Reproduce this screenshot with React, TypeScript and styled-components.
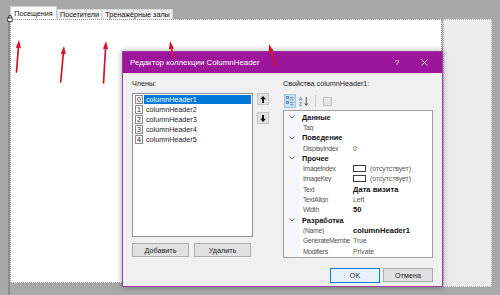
import React from "react";
import styled, { createGlobalStyle } from "styled-components";

const GlobalStyle = createGlobalStyle`
  html, body { margin: 0; padding: 0; background: #a8a8a8; }
  body { font-family: "Liberation Sans", Arial, sans-serif; }
  * { box-sizing: border-box; }
`;

const Screen = styled.div`
  position: relative;
  width: 500px;
  height: 295px;
  overflow: hidden;
  background: #a8a8a8;
  padding: 6px 0 0 8px;
  display: flex;
  flex-direction: column;
`;

const TabStrip = styled.div`
  display: flex;
  align-items: flex-end;
  height: 13px;
  padding-left: 2px;
`;

const Tab = styled.div<{ $active?: boolean; $w: number }>`
  width: ${(p) => p.$w}px;
  height: ${(p) => (p.$active ? 13 : 10)}px;
  background: ${(p) => (p.$active ? "#ffffff" : "#f0f0f0")};
  border: 1px solid ${(p) => (p.$active ? "#d0d0d0" : "#dadada")};
  border-bottom: none;
  font-size: 7.2px;
  color: #111;
  display: flex;
  align-items: center;
  justify-content: center;
  white-space: nowrap;
`;

const Workspace = styled.div`
  flex: 1;
  display: flex;
  align-items: flex-start;
  gap: 1px;
  border-left: 2px solid #8c8c8c;
`;

const Canvas = styled.div`
  width: 432px;
  height: 264px;
  background: #ffffff;
  border: 1px dotted #9a9a9a;
`;

const SidePanel = styled.div`
  width: 49px;
  height: 268px;
  background: #ececec;
  border: 1px dotted #b8b8b8;
`;

const MoveGlyph = styled.svg`
  position: absolute;
  left: 7px;
  top: 15px;
`;

/* ---------- dialog ---------- */

const Dialog = styled.div`
  position: absolute;
  left: 122px;
  top: 51px;
  width: 321px;
  height: 236px;
  background: #f0f0f0;
  border: 1px solid #9c3c9b;
  box-shadow: 0 0 6px rgba(0, 0, 0, 0.35);
  display: flex;
  flex-direction: column;
`;

const TitleBar = styled.div`
  height: 21px;
  background: #9b169a;
  color: #ffffff;
  display: flex;
  align-items: center;
  padding-left: 7px;
  font-size: 7.9px;
`;

const TitleText = styled.span`
  flex: 1;
  white-space: nowrap;
`;

const TitleButtons = styled.div`
  display: flex;
  align-items: center;
  gap: 13px;
  margin-right: 11px;
`;

const TitleButton = styled.span`
  width: 14px;
  display: flex;
  justify-content: center;
  align-items: center;
  font-size: 8px;
  color: #fff;
`;

const Body = styled.div`
  flex: 1;
  display: flex;
  flex-direction: column;
  padding: 6px 9px 0 9px;
`;

const Columns = styled.div`
  display: flex;
  align-items: flex-start;
`;

const LeftCol = styled.div`
  width: 121px;
  display: flex;
  flex-direction: column;
`;

const Label = styled.div`
  height: 10px;
  line-height: 10px;
  font-size: 7.2px;
  color: #222;
  white-space: nowrap;
`;

const ListBox = styled.div`
  margin-top: 4px;
  height: 144px;
  background: #ffffff;
  border: 1px solid #8c9098;
  padding: 0 1px;
`;

const ListItem = styled.div`
  height: 10px;
  display: flex;
  align-items: center;
  padding-left: 1px;
  gap: 1px;
`;

const IndexBox = styled.span`
  width: 8px;
  height: 9px;
  border: 1px solid #8a8a8a;
  font-size: 7px;
  line-height: 7px;
  color: #222;
  display: flex;
  align-items: center;
  justify-content: center;
`;

const ItemText = styled.span<{ $selected?: boolean }>`
  flex: 1;
  height: 9px;
  line-height: 9px;
  padding-left: 2px;
  font-size: 7.2px;
  color: ${(p) => (p.$selected ? "#ffffff" : "#1a1a1a")};
  background: ${(p) => (p.$selected ? "#0078d7" : "transparent")};
`;

const ButtonRow = styled.div`
  margin-top: 6px;
  display: flex;
  gap: 5px;
`;

const Button = styled.div<{ $primary?: boolean; $w: number }>`
  width: ${(p) => p.$w}px;
  height: ${(p) => (p.$primary ? 15 : 14)}px;
  background: ${(p) => (p.$primary ? "#e5f1fb" : "#e1e1e1")};
  border: 1px solid ${(p) => (p.$primary ? "#0078d7" : "#adadad")};
  font-size: 7.2px;
  color: #1a1a1a;
  display: flex;
  align-items: center;
  justify-content: center;
`;

const MoverCol = styled.div`
  width: 12px;
  margin-left: 4px;
  margin-top: 14px;
  display: flex;
  flex-direction: column;
  gap: 7px;
`;

const MoverButton = styled.div`
  width: 12px;
  height: 12px;
  background: #e1e1e1;
  border: 1px solid #c4c4c4;
  display: flex;
  align-items: center;
  justify-content: center;
`;

const RightCol = styled.div`
  width: 150px;
  margin-left: 14px;
  display: flex;
  flex-direction: column;
`;

const Toolbar = styled.div`
  margin-top: 5px;
  height: 14px;
  display: flex;
  align-items: center;
  gap: 2px;
  padding-left: 1px;
`;

const ToolButton = styled.div<{ $active?: boolean }>`
  width: 12px;
  height: 14px;
  display: flex;
  align-items: center;
  justify-content: center;
  background: ${(p) => (p.$active ? "#cce4f7" : "transparent")};
  border: 1px solid ${(p) => (p.$active ? "#99c9ef" : "transparent")};
`;

const ToolSeparator = styled.div`
  width: 1px;
  height: 12px;
  background: #c8c8c8;
  margin: 0 3px;
`;

const Grid = styled.div`
  margin-top: 2px;
  height: 148px;
  border: 1px solid #a0a0a0;
  background: linear-gradient(to right, #f4f6f9 16px, #ffffff 16px);
  padding-top: 1px;
  overflow: hidden;
`;

const GridRow = styled.div`
  height: 10.3px;
  display: grid;
  grid-template-columns: 16px 53px 1fr;
  align-items: center;
`;

const Gutter = styled.div`
  display: flex;
  align-items: center;
  justify-content: center;
  height: 100%;
`;

const CategoryText = styled.div`
  grid-column: 2 / 4;
  padding-left: 2px;
  font-size: 7.4px;
  font-weight: bold;
  color: #111;
  white-space: nowrap;
`;

const PropName = styled.div`
  padding-left: 3px;
  font-size: 6.8px;
  letter-spacing: -0.3px;
  color: #555;
  white-space: nowrap;
  overflow: hidden;
`;

const PropValue = styled.div<{ $bold?: boolean }>`
  display: flex;
  align-items: center;
  gap: 4px;
  font-size: ${(p) => (p.$bold ? 7.6 : 6.8)}px;
  font-weight: ${(p) => (p.$bold ? "bold" : "normal")};
  color: ${(p) => (p.$bold ? "#111" : "#555")};
  white-space: nowrap;
`;

const Swatch = styled.span`
  width: 13px;
  height: 7px;
  background: #ffffff;
  border: 1px solid #3a3a3a;
`;

const Footer = styled.div`
  margin-top: 10px;
  display: flex;
  justify-content: flex-end;
  gap: 3px;
`;

const ArrowLayer = styled.svg`
  position: absolute;
  left: 0;
  top: 0;
  pointer-events: none;
`;

/* ---------- data ---------- */

const members = ["columnHeader1", "columnHeader2", "columnHeader3", "columnHeader4", "columnHeader5"];

type Row =
  | { kind: "cat"; label: string }
  | { kind: "prop"; name: string; value: string; bold?: boolean; swatch?: boolean };

const rows: Row[] = [
  { kind: "cat", label: "Данные" },
  { kind: "prop", name: "Tag", value: "" },
  { kind: "cat", label: "Поведение" },
  { kind: "prop", name: "DisplayIndex", value: "0" },
  { kind: "cat", label: "Прочее" },
  { kind: "prop", name: "ImageIndex", value: "(отсутствует)", swatch: true },
  { kind: "prop", name: "ImageKey", value: "(отсутствует)", swatch: true },
  { kind: "prop", name: "Text", value: "Дата визита", bold: true },
  { kind: "prop", name: "TextAlign", value: "Left" },
  { kind: "prop", name: "Width", value: "50", bold: true },
  { kind: "cat", label: "Разработка" },
  { kind: "prop", name: "(Name)", value: "columnHeader1", bold: true },
  { kind: "prop", name: "GenerateMembe", value: "True" },
  { kind: "prop", name: "Modifiers", value: "Private" },
];

const arrows = [
  { x1: 16.5, y1: 72, x2: 19, y2: 40 },
  { x1: 60.7, y1: 82, x2: 64, y2: 46 },
  { x1: 103.5, y1: 83, x2: 106, y2: 41 },
  { x1: 173, y1: 57, x2: 170, y2: 41 },
  { x1: 275, y1: 65, x2: 269, y2: 44 },
];

/* ---------- icons ---------- */

const Chevron = () => (
  <svg width="6" height="4" viewBox="0 0 6 4">
    <path d="M0.5 0.5 L3 3 L5.5 0.5" fill="none" stroke="#555" strokeWidth="0.9" />
  </svg>
);

const MoveArrow = ({ down }: { down?: boolean }) => (
  <svg width="6" height="7" viewBox="0 0 6 7" style={down ? { transform: "rotate(180deg)" } : undefined}>
    <path d="M3 0 L6 3.3 L4 3.3 L4 7 L2 7 L2 3.3 L0 3.3 Z" fill="#111" />
  </svg>
);

const CategorizedIcon = () => (
  <svg width="8" height="10" viewBox="0 0 8 10">
    <rect x="0.5" y="0.5" width="2" height="2" fill="none" stroke="#3c6da8" strokeWidth="0.8" />
    <rect x="4" y="1" width="3.5" height="1" fill="#6a8fbf" />
    <rect x="4" y="3.3" width="3.5" height="1" fill="#6a8fbf" />
    <rect x="0.5" y="5.5" width="2" height="2" fill="none" stroke="#3c6da8" strokeWidth="0.8" />
    <rect x="4" y="6" width="3.5" height="1" fill="#6a8fbf" />
    <rect x="4" y="8.3" width="3.5" height="1" fill="#6a8fbf" />
  </svg>
);

const AlphaIcon = () => (
  <svg width="11" height="11" viewBox="0 0 11 11">
    <text x="0" y="5" fontSize="5.5" fontFamily="Liberation Sans, Arial, sans-serif" fill="#2c5aa0">A</text>
    <text x="0" y="10.5" fontSize="5.5" fontFamily="Liberation Sans, Arial, sans-serif" fill="#2c5aa0">Z</text>
    <path d="M8 0.5 L8 9.5 M6.3 7.6 L8 9.8 L9.7 7.6" fill="none" stroke="#333" strokeWidth="0.9" />
  </svg>
);

const PagesIcon = () => (
  <svg width="9" height="9" viewBox="0 0 9 9">
    <rect x="0.5" y="0.5" width="8" height="8" fill="#f4f4f4" stroke="#b4b4b4" strokeWidth="0.8" />
    <path d="M1 3 H8 M1 5 H8 M1 7 H8" stroke="#c4c4c4" strokeWidth="0.7" />
  </svg>
);

const CloseIcon = () => (
  <svg width="7" height="7" viewBox="0 0 7 7">
    <path d="M0.5 0.5 L6.5 6.5 M6.5 0.5 L0.5 6.5" stroke="#fff" strokeWidth="0.9" />
  </svg>
);

const Arrow = ({ x1, y1, x2, y2 }: { x1: number; y1: number; x2: number; y2: number }) => {
  const dx = x2 - x1;
  const dy = y2 - y1;
  const len = Math.hypot(dx, dy);
  const ux = dx / len;
  const uy = dy / len;
  const hl = 8;
  const hw = 2.6;
  const bx = x2 - ux * hl;
  const by = y2 - uy * hl;
  const px = -uy;
  const py = ux;
  const pts = `${x2},${y2} ${bx + px * hw},${by + py * hw} ${bx - px * hw},${by - py * hw}`;
  return (
    <g>
      <line x1={x1} y1={y1} x2={bx + ux} y2={by + uy} stroke="#d0142a" strokeWidth="1.7" strokeLinecap="round" />
      <polygon points={pts} fill="#d0142a" />
    </g>
  );
};

export default function App() {
  return (
    <>
      <GlobalStyle />
      <Screen>
        <TabStrip>
          <Tab $active $w={47}>Посещения</Tab>
          <Tab $w={45}>Посетители</Tab>
          <Tab $w={71}>Тренажёрные залы</Tab>
        </TabStrip>
        <Workspace>
          <Canvas />
          <SidePanel />
        </Workspace>

        <MoveGlyph width="6" height="7" viewBox="0 0 6 7">
          <path d="M1.5 3 V1.8 A1.5 1.5 0 0 1 4.5 1.8 V3" fill="none" stroke="#222" strokeWidth="0.8" />
          <rect x="0.8" y="3" width="4.4" height="3.4" fill="#fff" stroke="#222" strokeWidth="0.8" />
        </MoveGlyph>

        <Dialog>
          <TitleBar>
            <TitleText>Редактор коллекции ColumnHeader</TitleText>
            <TitleButtons>
              <TitleButton>?</TitleButton>
              <TitleButton>
                <CloseIcon />
              </TitleButton>
            </TitleButtons>
          </TitleBar>
          <Body>
            <Columns>
              <LeftCol>
                <Label>Члены:</Label>
                <ListBox>
                  {members.map((m, i) => (
                    <ListItem key={m}>
                      <IndexBox>{i}</IndexBox>
                      <ItemText $selected={i === 0}>{m}</ItemText>
                    </ListItem>
                  ))}
                </ListBox>
                <ButtonRow>
                  <Button $w={57}>Добавить</Button>
                  <Button $w={57}>Удалить</Button>
                </ButtonRow>
              </LeftCol>
              <MoverCol>
                <MoverButton>
                  <MoveArrow />
                </MoverButton>
                <MoverButton>
                  <MoveArrow down />
                </MoverButton>
              </MoverCol>
              <RightCol>
                <Label>Свойства columnHeader1:</Label>
                <Toolbar>
                  <ToolButton $active>
                    <CategorizedIcon />
                  </ToolButton>
                  <ToolButton>
                    <AlphaIcon />
                  </ToolButton>
                  <ToolSeparator />
                  <ToolButton>
                    <PagesIcon />
                  </ToolButton>
                </Toolbar>
                <Grid>
                  {rows.map((r, i) =>
                    r.kind === "cat" ? (
                      <GridRow key={i}>
                        <Gutter>
                          <Chevron />
                        </Gutter>
                        <CategoryText>{r.label}</CategoryText>
                      </GridRow>
                    ) : (
                      <GridRow key={i}>
                        <Gutter />
                        <PropName>{r.name}</PropName>
                        <PropValue $bold={r.bold}>
                          {r.swatch && <Swatch />}
                          {r.value}
                        </PropValue>
                      </GridRow>
                    )
                  )}
                </Grid>
              </RightCol>
            </Columns>
            <Footer>
              <Button $primary $w={50}>OK</Button>
              <Button $w={50}>Отмена</Button>
            </Footer>
          </Body>
        </Dialog>

        <ArrowLayer width="500" height="295" viewBox="0 0 500 295">
          {arrows.map((a, i) => (
            <Arrow key={i} {...a} />
          ))}
        </ArrowLayer>
      </Screen>
    </>
  );
}
